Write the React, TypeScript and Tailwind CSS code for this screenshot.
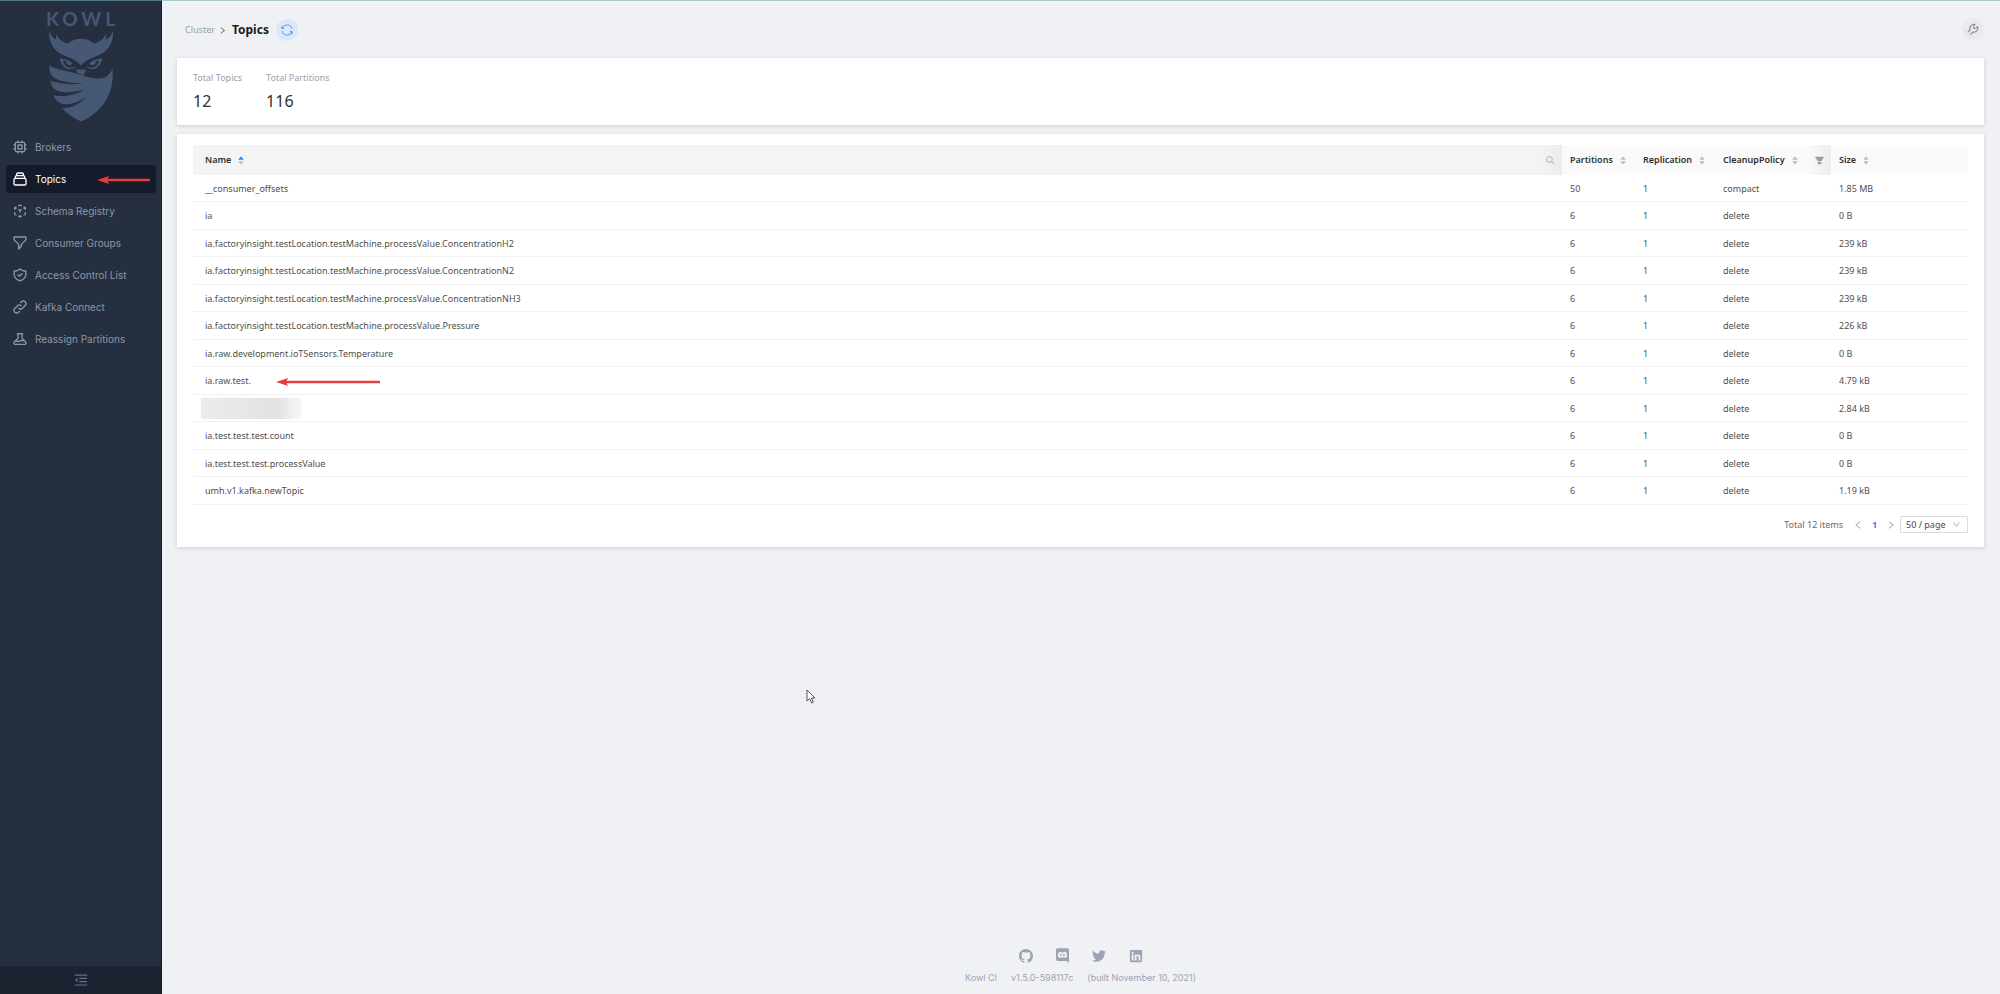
import type { ReactNode } from 'react'
import {
  AiFillCaretDown,
  AiFillCaretUp,
  AiFillFilter,
  AiOutlineDown,
  AiOutlineLeft,
  AiOutlineMenuFold,
  AiOutlineRight,
  AiOutlineSearch,
} from 'react-icons/ai'
import {
  HiOutlineBeaker,
  HiOutlineChip,
  HiOutlineCollection,
  HiOutlineCubeTransparent,
  HiOutlineFilter,
  HiOutlineLink,
  HiOutlineShieldCheck,
} from 'react-icons/hi'
import { GoSync } from 'react-icons/go'
import { FaLinkedin, FaTwitter } from 'react-icons/fa'

const navItems = [
  { label: 'Brokers', icon: HiOutlineChip },
  { label: 'Topics', icon: HiOutlineCollection, active: true },
  { label: 'Schema Registry', icon: HiOutlineCubeTransparent },
  { label: 'Consumer Groups', icon: HiOutlineFilter },
  { label: 'Access Control List', icon: HiOutlineShieldCheck },
  { label: 'Kafka Connect', icon: HiOutlineLink },
  { label: 'Reassign Partitions', icon: HiOutlineBeaker },
]

const PREFIX = 'ia.factoryinsight.testLocation.testMachine.processValue.'

const topics = [
  { name: '__consumer_offsets', partitions: 50, policy: 'compact', size: '1.85 MB' },
  { name: 'ia', partitions: 6, policy: 'delete', size: '0 B' },
  { name: PREFIX + 'ConcentrationH2', partitions: 6, policy: 'delete', size: '239 kB' },
  { name: PREFIX + 'ConcentrationN2', partitions: 6, policy: 'delete', size: '239 kB' },
  { name: PREFIX + 'ConcentrationNH3', partitions: 6, policy: 'delete', size: '239 kB' },
  { name: PREFIX + 'Pressure', partitions: 6, policy: 'delete', size: '226 kB' },
  { name: 'ia.raw.development.ioTSensors.Temperature', partitions: 6, policy: 'delete', size: '0 B' },
  { name: 'ia.raw.test.', partitions: 6, policy: 'delete', size: '4.79 kB', marked: true },
  { name: '', partitions: 6, policy: 'delete', size: '2.84 kB' },
  { name: 'ia.test.test.test.count', partitions: 6, policy: 'delete', size: '0 B' },
  { name: 'ia.test.test.test.processValue', partitions: 6, policy: 'delete', size: '0 B' },
  { name: 'umh.v1.kafka.newTopic', partitions: 6, policy: 'delete', size: '1.19 kB' },
]

function OwlLogo() {
  return (
    <svg viewBox="144 90 198 278" className="w-[66px] h-[93px]" fill="#475875" aria-hidden="true">
      <path d="M148 93 C152 108 158 116 170 121 C167 115 167 110 169 105 C174 118 186 128 204 133 C214 124 228 119 243 119 C258 119 272 124 282 133 C300 128 312 118 317 105 C319 110 319 115 316 121 C328 116 335 108 339 93 C342 128 326 152 300 166 C276 176 254 184 243 199 C232 184 210 176 186 166 C160 152 144 128 148 93 Z" />
      <path d="M178 178 C194 178 216 184 226 204 C218 210 206 212 198 207 C188 202 184 192 178 178 Z" />
      <path d="M308 178 C292 178 270 184 260 204 C268 210 280 212 288 207 C298 202 302 192 308 178 Z" />
      <path d="M189 184 C193 184 197 185 200 186 C196 197 212 203 217 192 C221 196 223 200 224 203 C212 209 193 206 189 184 Z" fill="#262f40" />
      <path d="M297 184 C293 184 289 185 286 186 C290 197 274 203 269 192 C265 196 263 200 262 203 C274 209 293 206 297 184 Z" fill="#262f40" />
      <path d="M227 211 L259 211 L250 229 L232 221 Z" />
      <path d="M148 199 C170 214 220 217 256 231 C284 240 310 240 321 231 C331 223 336 215 338 206 C340 250 334 280 316 306 C298 334 272 354 243 367 C220 357 202 343 186 327 C214 328 240 314 262 291 C232 314 190 322 174 308 C166 301 163 295 161 288 C192 296 230 286 254 271 C222 280 182 284 166 272 C156 264 152 256 152 245 C182 256 220 257 252 252 C214 252 176 246 160 234 C150 224 147 212 148 199 Z" />
    </svg>
  )
}

function WrenchIcon() {
  return (
    <svg viewBox="0 0 36 36" className="size-3" fill="none" stroke="currentColor" strokeWidth="3.500" strokeLinecap="round" strokeLinejoin="round" aria-hidden="true">
      <path d="M3 27 L9 21 C6 12 14 2 24 4 L20 9 C18 14 22 18 27 15 L32 11 C35 21 27 29 18 27 L11 34" />
    </svg>
  )
}

function GithubIcon() {
  return (
    <svg viewBox="0 0 16 16" className="size-[14px]" fill="currentColor" aria-hidden="true">
      <path d="M8 0C3.58 0 0 3.58 0 8c0 3.54 2.29 6.53 5.47 7.59.4.07.55-.17.55-.38 0-.19-.01-.82-.01-1.49-2.01.37-2.53-.49-2.69-.94-.09-.23-.48-.94-.82-1.13-.28-.15-.68-.52-.01-.53.63-.01 1.08.58 1.23.82.72 1.21 1.87.87 2.33.66.07-.52.28-.87.51-1.07-1.78-.2-3.64-.89-3.64-3.95 0-.87.31-1.59.82-2.15-.08-.2-.36-1.02.08-2.12 0 0 .67-.21 2.2.82.64-.18 1.32-.27 2-.27s1.36.09 2 .27c1.53-1.04 2.2-.82 2.2-.82.44 1.1.16 1.92.08 2.12.51.56.82 1.27.82 2.15 0 3.07-1.87 3.75-3.65 3.95.29.25.54.73.54 1.48 0 1.07-.01 1.93-.01 2.2 0 .21.15.46.55.38A8.01 8.01 0 0016 8c0-4.42-3.58-8-8-8z" />
    </svg>
  )
}

function DiscordIcon() {
  return (
    <svg viewBox="0 0 24 27" className="w-[13px] h-[15px]" fill="currentColor" aria-hidden="true">
      <path
        fillRule="evenodd"
        d="M3 0 H21 A3 3 0 0 1 24 3 V27 L19.500 23.500 H3 A3 3 0 0 1 0 20.500 V3 A3 3 0 0 1 3 0 Z M8 6.500 C6.500 6.800 5.600 7.300 5 7.800 C3.800 10.300 3.300 13 3.500 16 C4.700 17.300 6.300 18 8 18 L9 16.700 C11 17.200 13 17.200 15 16.700 L16 18 C17.700 18 19.300 17.300 20.500 16 C20.700 13 20.200 10.300 19 7.800 C18.400 7.300 17.500 6.800 16 6.500 L15.200 7.600 H8.800 Z M9.300 10.800 A1.700 1.800 0 1 1 9.300 14.400 A1.700 1.800 0 1 1 9.300 10.800 Z M14.700 10.800 A1.700 1.800 0 1 1 14.700 14.400 A1.700 1.800 0 1 1 14.700 10.800 Z"
      />
    </svg>
  )
}

function Arrow({ className }: { className: string }) {
  return (
    <svg viewBox="0 0 104 10" preserveAspectRatio="xMinYMid slice" className={className} aria-hidden="true">
      <path d="M9 5 H104" stroke="#e53d3d" strokeWidth="2.400" />
      <path d="M0 5 L12 1 L10 5 L12 9 Z" fill="#e53d3d" />
    </svg>
  )
}

function Sorter({ active }: { active?: boolean }) {
  return (
    <span className="flex flex-col text-[8px] text-[#bfbfbf]">
      <AiFillCaretUp className={active ? 'text-[#2f80ff]' : ''} />
      <AiFillCaretDown className="-mt-[3px]" />
    </span>
  )
}

function HeadCell({ title, active, className, children }: {
  title: string
  active?: boolean
  className: string
  children?: ReactNode
}) {
  return (
    <th className={`h-[30px] p-0 text-left font-semibold text-[#303030] ${className}`}>
      <div className="flex h-full items-stretch justify-between">
        <button className="flex items-center gap-[6px]">
          {title}
          <Sorter active={active} />
        </button>
        {children}
      </div>
    </th>
  )
}

function Sidebar() {
  return (
    <aside className="flex w-[162px] shrink-0 flex-col border-r border-[#151d2c] bg-[#262f40] font-[Inter,sans-serif]">
      <div className="flex flex-col items-center pt-[9px]">
        <div className="pl-1 font-[Lato,sans-serif] text-[19px] leading-5 font-bold tracking-[4px] text-[#475875]">KOWL</div>
        <OwlLogo />
      </div>

      <nav className="mt-[11px] flex flex-col gap-1 pr-[5px] pl-[6px]">
        {navItems.map(({ label, icon: Icon, active }) => (
          <a
            key={label}
            href="#"
            className={`relative flex h-7 items-center gap-[7px] rounded-[3px] pl-[6px] text-[10px] ${
              active ? 'bg-[#161b2b] text-white' : 'text-[#8d97a8]'
            }`}
          >
            <Icon className="text-[16px]" />
            {label}
            {active && <Arrow className="absolute top-[10px] right-[6px] h-[10px] w-[53px]" />}
          </a>
        ))}
      </nav>

      <button className="mt-auto flex h-7 items-center justify-center bg-[#1b2230] text-[16px] text-[#65718a]" aria-label="Collapse menu">
        <AiOutlineMenuFold />
      </button>
    </aside>
  )
}

function Pagination() {
  return (
    <div className="mt-[11px] flex items-center justify-end text-[9px] text-[#6b6b6b]">
      <span className="mr-[10px]">Total 12 items</span>
      <button className="flex w-[17px] justify-start text-[10px] text-[#a0a0a0]" aria-label="Previous page"><AiOutlineLeft /></button>
      <button className="w-[9px] font-bold text-[#2f80ff]">1</button>
      <button className="flex w-[21px] justify-end pr-1 text-[10px] text-[#a0a0a0]" aria-label="Next page"><AiOutlineRight /></button>
      <div className="relative">
        <select
          aria-label="Page size"
          className="h-[17px] w-[68px] appearance-none rounded-[1px] border border-[#dcdcdc] bg-white pl-[5px] text-[9px] leading-[15px] text-[#4a4a4a]"
        >
          <option>50 / page</option>
        </select>
        <AiOutlineDown className="pointer-events-none absolute top-1 right-[7px] text-[9px] text-[#a8a8a8]" />
      </div>
    </div>
  )
}

export default function App() {
  return (
    <div className="relative flex min-h-screen bg-[#f0f1f5] font-['Noto_Sans',sans-serif] text-[9px]">
      <div className="absolute inset-x-0 top-0 h-px bg-[#6fb0b5]/60" />

      <Sidebar />

      <main className="flex min-w-0 flex-1 flex-col pr-4 pl-[15px]">
        {/* Breadcrumb */}
        <header className="flex h-[58px] items-center justify-between">
          <div className="flex items-center pt-[2px] pl-2">
            <a href="#" className="text-[#9b9da1]">Cluster</a>
            <AiOutlineRight className="mx-[3px] text-[9px] text-[#555]" />
            <h1 className="ml-[2px] text-[12px] font-bold text-[#1a1a1a]">Topics</h1>
            <button className="ml-[7px] flex size-[22px] items-center justify-center rounded-full bg-[#dde7f8] text-[12px] text-[#2f86ff]" aria-label="Refresh">
              <GoSync />
            </button>
          </div>
          <button className="flex size-[22px] items-center justify-center rounded-full bg-[#e8eaee] text-[#8e9196]" aria-label="Settings">
            <WrenchIcon />
          </button>
        </header>

        {/* Statistics */}
        <section className="flex h-[67px] gap-6 bg-white px-4 pt-[13px] shadow-[0_1px_4px_rgba(40,60,90,0.2)]">
          <div>
            <div className="leading-[14px] text-[#a0a0a0]">Total Topics</div>
            <div className="mt-[6px] text-[16px] leading-5 text-[#303030]">12</div>
          </div>
          <div>
            <div className="leading-[14px] text-[#a0a0a0]">Total Partitions</div>
            <div className="mt-[6px] text-[16px] leading-5 text-[#303030]">116</div>
          </div>
        </section>

        {/* Topic list */}
        <section className="mt-[9px] bg-white px-4 pt-[11px] pb-[14px] shadow-[0_1px_4px_rgba(40,60,90,0.2)]">
          <table className="w-full table-fixed border-separate border-spacing-0 text-[#4f4f4f]">
            <thead className="bg-[#fafafa]">
              <tr>
                <HeadCell title="Name" active className="bg-[#f4f4f4] pl-3">
                  <button className="flex w-[23px] items-center justify-center bg-linear-to-r from-[#f4f4f4] to-[#ececec] text-[11px] text-[#a5a5a5]" aria-label="Search">
                    <AiOutlineSearch />
                  </button>
                </HeadCell>
                <HeadCell title="Partitions" className="w-[73px] pl-2" />
                <HeadCell title="Replication" className="w-20 pl-2" />
                <HeadCell title="CleanupPolicy" className="w-[116px] pl-2">
                  <button className="flex w-[23px] items-center justify-center bg-linear-to-r from-[#fafafa] to-[#ececec] text-[11px] text-[#9d9d9d]" aria-label="Filter">
                    <AiFillFilter />
                  </button>
                </HeadCell>
                <HeadCell title="Size" className="w-[137px] pl-2" />
              </tr>
            </thead>
            <tbody>
              {topics.map((topic, i) => (
                <tr key={i} className="h-7 odd:h-[27px] *:border-b *:border-[#f2f2f2] *:p-0 *:pt-px *:pl-2">
                  <td className="relative">
                    {topic.name ? (
                      <span className="ml-1">{topic.name}</span>
                    ) : (
                      <div className="h-[21px] w-[101px] bg-linear-to-r from-[#ececec] via-[#e2e2e2] via-75% to-[#f8f8f8]" />
                    )}
                    {topic.marked && <Arrow className="absolute top-[10px] left-[83px] h-[10px] w-[104px]" />}
                  </td>
                  <td>{topic.partitions}</td>
                  <td>1</td>
                  <td>{topic.policy}</td>
                  <td>{topic.size}</td>
                </tr>
              ))}
            </tbody>
          </table>
          <Pagination />
        </section>

        {/* Footer */}
        <footer className="mt-auto flex flex-col items-center pb-[9px] font-[Inter,sans-serif] text-[#9da3b3]">
          <div className="flex items-center gap-[23px] text-[14px]">
            <a href="#" aria-label="GitHub"><GithubIcon /></a>
            <a href="#" aria-label="Discord"><DiscordIcon /></a>
            <a href="#" aria-label="Twitter"><FaTwitter /></a>
            <a href="#" aria-label="LinkedIn"><FaLinkedin /></a>
          </div>
          <div className="mt-2 flex gap-3.5 text-[9px] leading-[14px]">
            <span>Kowl CI</span>
            <span>v1.5.0-598117c</span>
            <span>(built November 10, 2021)</span>
          </div>
        </footer>
      </main>

      {/* Mouse pointer */}
      <svg viewBox="0 0 10 15" className="pointer-events-none absolute top-[689px] left-[806px] h-[15px] w-[10px]" aria-hidden="true">
        <path d="M1 1 V12 L3.600 9.700 L5.600 14 L7.300 13.200 L5.400 9 H9 Z" fill="#fff" stroke="#444" strokeWidth="0.900" />
      </svg>
    </div>
  )
}
